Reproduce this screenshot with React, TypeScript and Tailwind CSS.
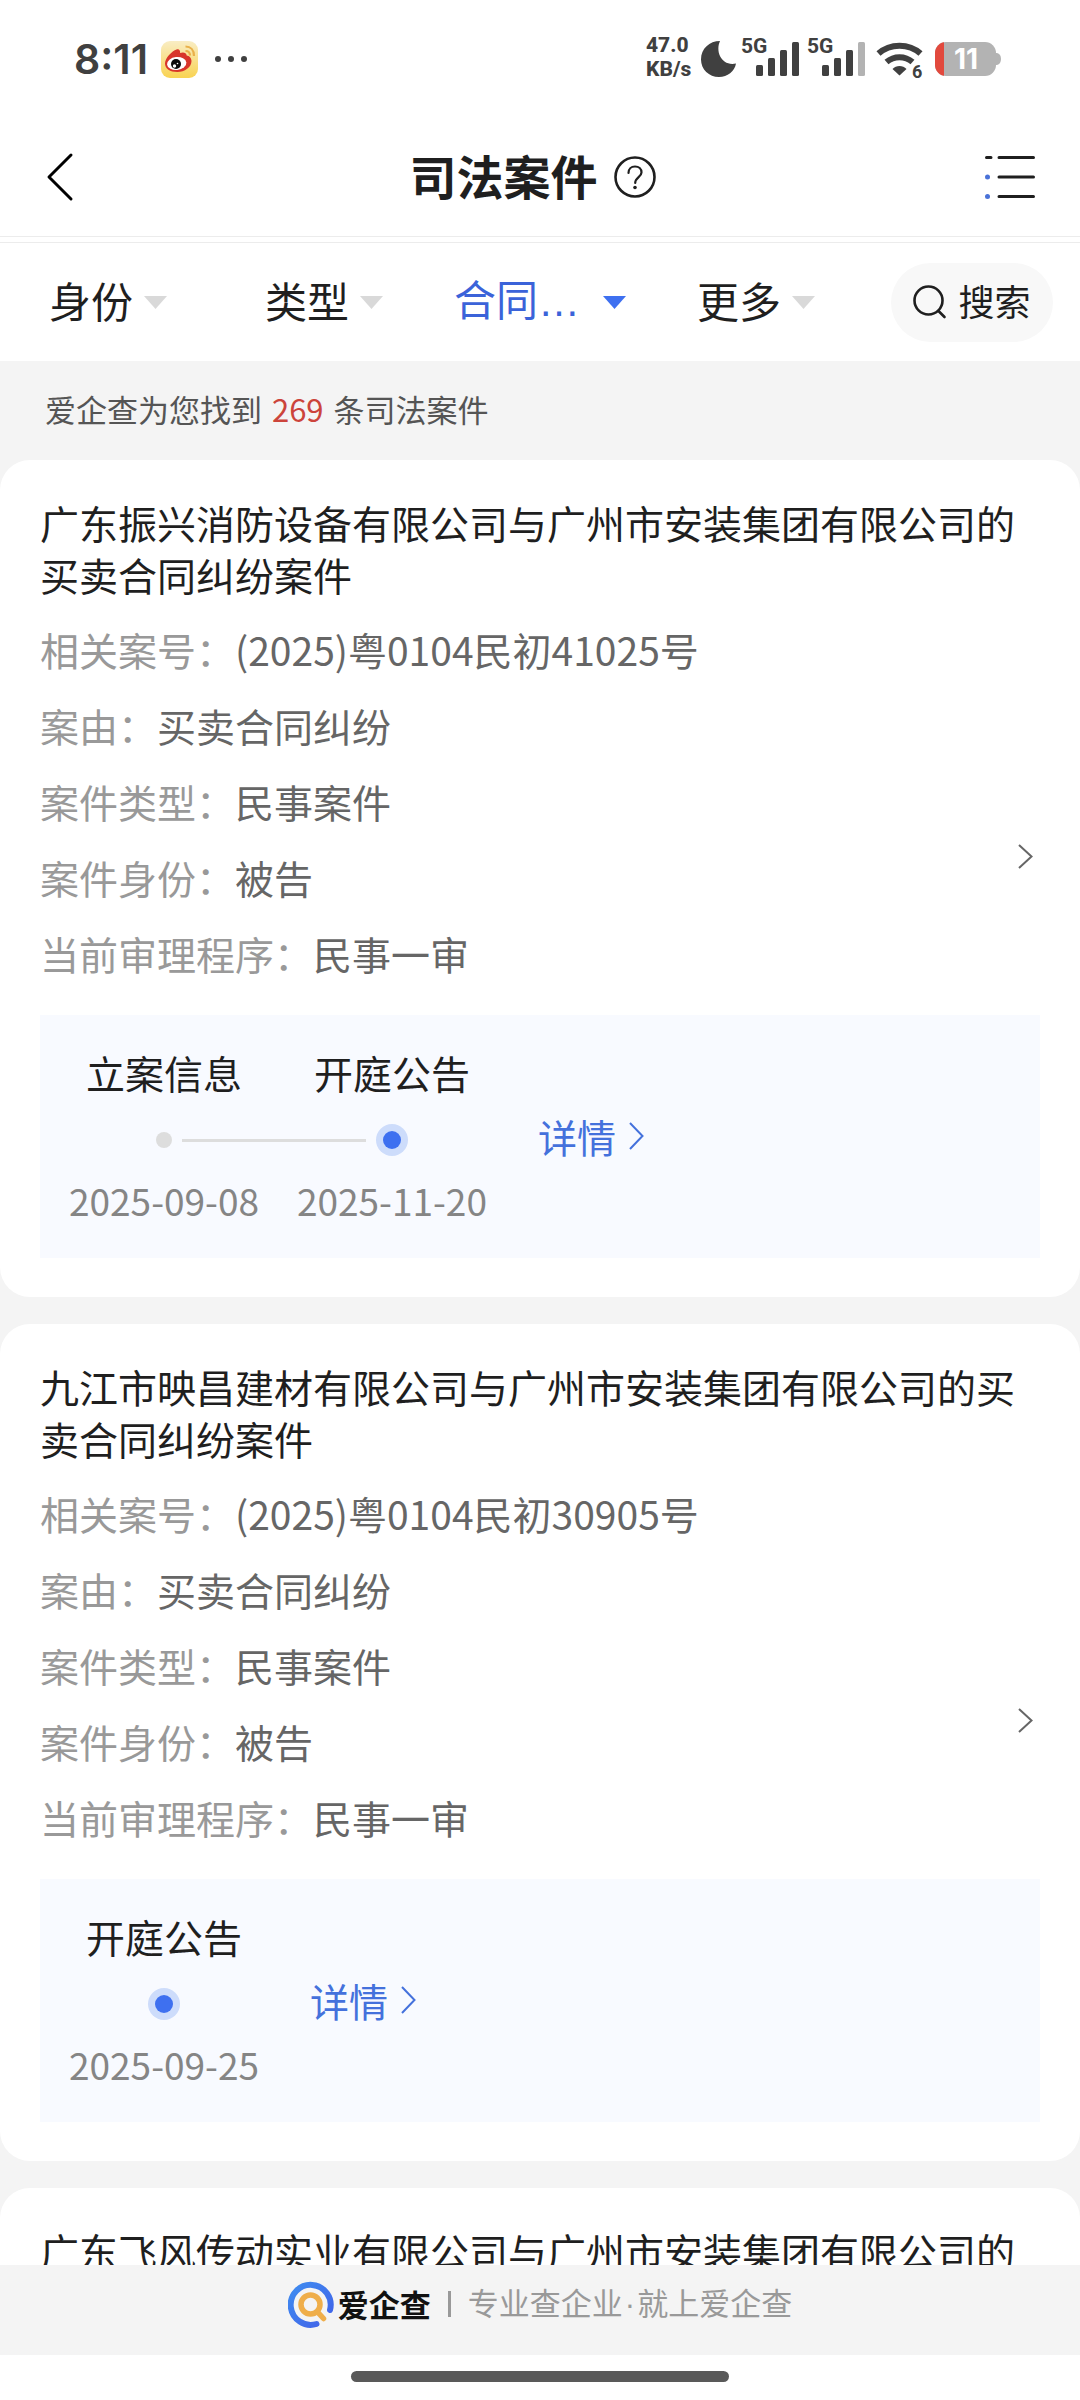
import { useState } from 'react';
import clsx from 'clsx';

type Step = { name: string; date: string };

type CaseItem = {
  title: string;
  fields: [string, string][];
  steps: Step[];
};

const TOTAL = 269;

const CASES: CaseItem[] = [
  {
    title: '广东振兴消防设备有限公司与广州市安装集团有限公司的买卖合同纠纷案件',
    fields: [
      ['相关案号', '(2025)粤0104民初41025号'],
      ['案由', '买卖合同纠纷'],
      ['案件类型', '民事案件'],
      ['案件身份', '被告'],
      ['当前审理程序', '民事一审'],
    ],
    steps: [
      { name: '立案信息', date: '2025-09-08' },
      { name: '开庭公告', date: '2025-11-20' },
    ],
  },
  {
    title: '九江市映昌建材有限公司与广州市安装集团有限公司的买卖合同纠纷案件',
    fields: [
      ['相关案号', '(2025)粤0104民初30905号'],
      ['案由', '买卖合同纠纷'],
      ['案件类型', '民事案件'],
      ['案件身份', '被告'],
      ['当前审理程序', '民事一审'],
    ],
    steps: [{ name: '开庭公告', date: '2025-09-25' }],
  },
  {
    title: '广东飞风传动实业有限公司与广州市安装集团有限公司的',
    fields: [],
    steps: [],
  },
];

const FILTERS = [
  { id: 'role', label: '身份' },
  { id: 'type', label: '类型' },
  { id: 'cause', label: '合同', cut: true },
  { id: 'more', label: '更多' },
];

function WeiboIcon() {
  return (
    <svg width="37" height="37" viewBox="0 0 37 37" aria-hidden="true">
      <defs>
        <linearGradient id="weiboBg" x1="0" y1="0" x2="0" y2="1">
          <stop offset="0" stopColor="#f9edc4" />
          <stop offset="1" stopColor="#f9d352" />
        </linearGradient>
      </defs>
      <rect width="37" height="37" rx="9" fill="url(#weiboBg)" />
      <path
        d="M15.5 8.5c2-1 4 .2 3.600 3.500 2.500-1.200 6.400-.8 6.600 2.400 2.600.3 4.800 2.600 4.800 5.600 0 6.300-6.800 11-14.200 11C9 31 4 27.500 4 22.500 4 17 11 10 15.500 8.500z"
        fill="#d8352a"
      />
      <ellipse cx="15.700" cy="22.500" rx="9.700" ry="6.500" fill="#fff" transform="rotate(-6 15.700 22.500)" />
      <circle cx="15" cy="23" r="5" fill="#0b0b0b" />
      <circle cx="13.500" cy="25" r="1.700" fill="#fff" />
      <circle cx="16.500" cy="22.500" r=".8" fill="#fff" />
      <path d="M24.500 5.500c5 0 8.500 3.500 8.500 9.500M24.500 10c3 0 4.500 1.700 4.500 4.500" fill="none" stroke="#e9b04a" strokeWidth="2.200" />
    </svg>
  );
}

function Signal({ level }: { level: number }) {
  const bars = [
    { x: 15, y: 27 },
    { x: 27, y: 20 },
    { x: 39, y: 12 },
    { x: 51, y: 4 },
  ];
  return (
    <svg width="62" height="58" viewBox="0 -8 62 58" role="img" aria-label="5G">
      <text x="0" y="15" fontSize="21" fontWeight="700" fill="#404040" className="font-[Roboto,sans-serif]">5G</text>
      {bars.map((b, i) => (
        <rect key={b.x} x={b.x} y={b.y} width="7" height={38 - b.y} rx="1.500" fill={i < level ? '#404040' : '#b3b3b3'} />
      ))}
    </svg>
  );
}

function StatusBar() {
  return (
    <div className="flex h-[118px] items-center justify-between pr-[79px] pl-[74px] text-[#404040]">
      <div className="flex items-center">
        <span className="font-[Inter,sans-serif] text-[41px] leading-none font-semibold">8:11</span>
        <span className="ml-[13px]"><WeiboIcon /></span>
        <span className="ml-[17px] flex gap-[7px]">
          <i className="size-[6px] rounded-full bg-[#404040]" />
          <i className="size-[6px] rounded-full bg-[#404040]" />
          <i className="size-[6px] rounded-full bg-[#404040]" />
        </span>
      </div>
      <div className="flex items-center gap-1">
        <div className="w-[47px] pb-1 font-[Roboto,sans-serif] text-[21px] leading-6 font-extrabold">
          <div>47.0</div>
          <div>KB/s</div>
        </div>
        <svg width="40" height="40" viewBox="0 0 40 40" aria-hidden="true">
          <path d="M23 2C18 13 25 27.500 39 24.500 37.500 32.500 30.500 38 22 38 12 38 4 30.500 4 20.500 4 9.500 12.500 2 23 2z" fill="#404040" />
        </svg>
        <Signal level={4} />
        <Signal level={3} />
        <svg width="52" height="58" viewBox="0 -8 52 58" aria-hidden="true">
          <g fill="none" stroke="#404040" strokeWidth="6">
            <path d="M5.500 15.500C17 5 36 5 47.500 15.500" />
            <path d="M13.500 24C21 17.500 32 17.500 39.500 24" />
          </g>
          <path d="M19.500 31C23 27 30 27 33.500 31L26.500 37.500z" fill="#404040" />
          <text x="39" y="40" fontSize="18" fontWeight="700" fill="#404040" className="font-[Roboto,sans-serif]">6</text>
        </svg>
        <svg width="72" height="36" viewBox="0 0 72 36" role="img" aria-label="11%">
          <defs>
            <clipPath id="battery"><rect x="6" y="1" width="61" height="34" rx="11" /></clipPath>
          </defs>
          <g clipPath="url(#battery)">
            <rect x="6" y="1" width="61" height="34" fill="#b3b3b3" />
            <rect x="6" y="1" width="9" height="34" fill="#e2493d" />
          </g>
          <path d="M66 12h2q4 1 4 6t-4 6h-2z" fill="#b3b3b3" />
          <text x="37" y="28" fontSize="28" fontWeight="700" fill="#fff" textAnchor="middle" className="font-[Inter,sans-serif]">11</text>
        </svg>
      </div>
    </div>
  );
}

function NavBar() {
  return (
    <header className="flex h-[119px] items-center border-b border-[#ececec] pr-[45px] pl-[46px]">
      <div className="flex flex-1">
        <button aria-label="返回">
          <svg width="28" height="50" viewBox="0 0 28 50" fill="none" stroke="#000" strokeWidth="3" strokeLinecap="round" strokeLinejoin="round">
            <path d="M25 3L3 25l22 22" />
          </svg>
        </button>
      </div>
      <h1 className="pb-1 text-[47px] leading-[60px] font-bold text-[#1f1f1f]">司法案件</h1>
      <button aria-label="帮助" className="pr-4 pl-4">
        <svg width="42" height="42" viewBox="0 0 42 42" fill="none" stroke="#1f1f1f" strokeLinecap="round">
          <circle cx="21" cy="21" r="19.500" strokeWidth="2.600" />
          <path d="M14.500 17c0-4 2.700-6.500 6.500-6.500s6.500 2.400 6.500 6c0 4.500-6.300 5-6.300 10.500" strokeWidth="2.200" />
          <circle cx="21" cy="31.500" r="1.800" fill="#1f1f1f" stroke="none" />
        </svg>
      </button>
      <div className="flex flex-1 justify-end">
        <button aria-label="目录">
          <svg width="50" height="44" viewBox="0 0 50 44" strokeLinecap="round" strokeWidth="3">
            <path d="M1.500 2.500H6M14 2.500h34.500M14 22h34.500M14 41.500h34.500" stroke="#1f1f1f" />
            <circle cx="2.500" cy="22" r="2.500" fill="#4a72d8" />
            <circle cx="2.500" cy="41.500" r="2.500" fill="#4a72d8" />
          </svg>
        </button>
      </div>
    </header>
  );
}

function FilterBar() {
  const [active, setActive] = useState('cause');

  return (
    <div className="mt-[5px] grid h-[119px] grid-cols-5 items-center border-t border-[#ececec]">
      {FILTERS.map(f => (
        <button
          key={f.id}
          onClick={() => setActive(f.id)}
          className={clsx(
            'flex items-center justify-center gap-[11px] text-[42px] leading-[60px]',
            active === f.id ? 'text-[#3b63d9]' : 'text-[#1f1f1f]',
          )}
        >
          <span className={clsx('pb-1', f.cut && 'pr-3')}>
            {f.label}
            {f.cut && <span className="font-['Liberation_Sans',sans-serif]">…</span>}
          </span>
          <svg width="23" height="13" viewBox="0 0 23 13" aria-hidden="true">
            <path d="M0 0h23L11.500 13z" fill={active === f.id ? '#3e70f0' : '#d9d9d9'} />
          </svg>
        </button>
      ))}
      <button className="mx-[27px] flex h-[79px] items-center justify-center gap-[11px] rounded-full bg-[#f8f8f8] text-[36px] text-[#1f1f1f]">
        <svg width="34" height="34" viewBox="0 0 34 34" fill="none" stroke="#1f1f1f" strokeWidth="2.600" strokeLinecap="round">
          <circle cx="15.500" cy="15.500" r="14" />
          <path d="M25.500 26l6 6" />
        </svg>
        <span className="pb-1">搜索</span>
      </button>
    </div>
  );
}

function StepDot({ active }: { active: boolean }) {
  if (active) {
    return (
      <span className="flex size-8 items-center justify-center rounded-full bg-[#cddcfb]">
        <span className="size-[18px] rounded-full bg-[#3e70f0]" />
      </span>
    );
  }
  return <span className="size-4 rounded-full bg-[#dddddd]" />;
}

function Timeline({ steps }: { steps: Step[] }) {
  const last = steps.length - 1;
  return (
    <div className="mt-9 flex items-center bg-[#f8faff] pt-[31px] pb-[33px] pl-[10px]">
      <ol className="flex">
        {steps.map((s, i) => (
          <li key={s.name} className="flex flex-col">
            <span className="text-center text-[39px] leading-[52px] text-[#1f1f1f]">{s.name}</span>
            <span className="mt-[26px] mb-5 flex h-8 items-center gap-[10px]">
              <span className={clsx('h-[3px] flex-1', i > 0 && 'bg-[#dddddd]')} />
              <StepDot active={i === last} />
              <span className={clsx('-mr-px h-[3px] flex-1', i < last && 'bg-[#dddddd]')} />
            </span>
            <time className="px-[19px] text-center text-[37px] leading-[49px] text-[#858585]">{s.date}</time>
          </li>
        ))}
      </ol>
      <a href="#detail" className="ml-[32px] flex items-center gap-[13px] text-[39px] leading-[52px] text-[#4471dc]">
        详情
        <svg width="15" height="28" viewBox="0 0 15 28" fill="none" stroke="#4471dc" strokeWidth="2">
          <path d="M1 1l12.500 13L1 27" />
        </svg>
      </a>
    </div>
  );
}

function CaseCard({ item }: { item: CaseItem }) {
  return (
    <article className="rounded-[30px] bg-white px-10 pt-9 pb-[39px]">
      <h2 className="text-[39px] leading-[52px] text-[#1f1f1f]">{item.title}</h2>
      {item.fields.length > 0 && (
        <div className="mt-[23px] flex">
          <dl className="flex flex-1 flex-col gap-6 text-[39px] leading-[52px]">
            {item.fields.map(([label, value]) => (
              <div key={label} className="flex">
                <dt className="text-[#999999]">{label}：</dt>
                <dd className="text-[#666666]">{value}</dd>
              </div>
            ))}
          </dl>
          <a href="#case" aria-label="查看案件" className="mr-[7px] mb-[110px] self-end">
            <svg width="15" height="25" viewBox="0 0 15 25" fill="none" stroke="#666666" strokeWidth="2">
              <path d="M1 1l12.500 11.500L1 24" />
            </svg>
          </a>
        </div>
      )}
      {item.steps.length > 0 && <Timeline steps={item.steps} />}
    </article>
  );
}

function BrandFooter() {
  return (
    <footer>
      <div className="flex h-[90px] items-center justify-center bg-[#f4f4f4] pb-3 text-[31px]">
        <svg width="46" height="47" viewBox="0 0 46 47" fill="none" strokeLinecap="round" aria-hidden="true">
          <defs>
            <linearGradient id="ring" x1="0" y1="0" x2="1" y2="1">
              <stop offset="0" stopColor="#3f8cf0" />
              <stop offset="1" stopColor="#4161e8" />
            </linearGradient>
          </defs>
          <path d="M42 29A20 20 0 1 0 28.500 43" stroke="url(#ring)" strokeWidth="6" />
          <circle cx="22.500" cy="23.500" r="9.500" stroke="#efae4a" strokeWidth="5.500" />
          <path d="M30 31.500l5.500 6" stroke="#efae4a" strokeWidth="5.500" />
        </svg>
        <strong className="ml-1 text-[#111111]">爱企查</strong>
        <span className="mx-[17px] h-[26px] w-[3px] bg-[#999999]" />
        <span className="text-[#999999]">
          专业查企业<span className="px-[2px] font-['Liberation_Sans',sans-serif]">·</span>就上爱企查
        </span>
      </div>
      <div className="flex h-[45px] justify-center bg-white pt-4">
        <span className="h-[11px] w-[35%] rounded-full bg-[#595959]" />
      </div>
    </footer>
  );
}

export default function App() {
  return (
    <div lang="zh-CN" className="flex h-screen flex-col bg-white font-['Noto_Sans_CJK_SC',sans-serif]">
      <StatusBar />
      <NavBar />
      <FilterBar />
      <main className="min-h-0 flex-1 overflow-y-auto bg-[#f4f4f4] [scrollbar-width:none]">
        <p className="px-[45px] pt-[25px] pb-[29px] text-[31px] leading-[45px] text-[#555555]">
          爱企查为您找到 <span className="mx-[3px] text-[#cc443b]">{TOTAL}</span> 条司法案件
        </p>
        <div className="flex flex-col gap-[27px]">
          {CASES.map(item => (
            <CaseCard key={item.title} item={item} />
          ))}
        </div>
      </main>
      <BrandFooter />
    </div>
  );
}
